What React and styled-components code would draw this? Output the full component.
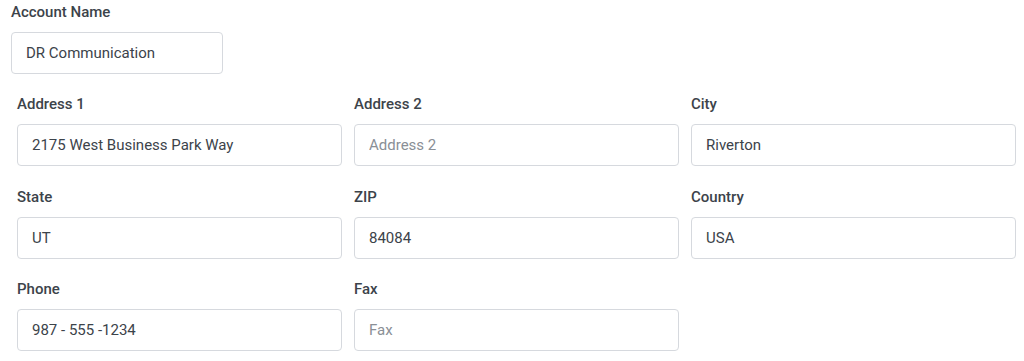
import React from 'react';
import styled, { createGlobalStyle } from 'styled-components';

const GlobalStyle = createGlobalStyle`
  html, body {
    margin: 0;
    padding: 0;
    background: #ffffff;
  }
  body {
    font-family: Roboto, "Liberation Sans", sans-serif;
  }
`;

const fields = [
  { label: 'Address 1', value: '2175 West Business Park Way' },
  { label: 'Address 2', placeholder: 'Address 2' },
  { label: 'City', value: 'Riverton' },
  { label: 'State', value: 'UT' },
  { label: 'ZIP', value: '84084' },
  { label: 'Country', value: 'USA' },
  { label: 'Phone', value: '987 - 555 -1234' },
  { label: 'Fax', placeholder: 'Fax' },
];

const App = () => {
  return (
    <>
      <GlobalStyle />
      <Page>
        <AccountField>
          <Label>Account Name</Label>
          <Input $width={212} defaultValue="DR Communication" />
        </AccountField>
        <FieldGrid>
          {fields.map((f) => (
            <Field key={f.label}>
              <Label>{f.label}</Label>
              <Input defaultValue={f.value} placeholder={f.placeholder} />
            </Field>
          ))}
        </FieldGrid>
      </Page>
    </>
  );
};

const Page = styled.div`
  padding: 3px 8px 0 11px;
  display: flex;
  flex-direction: column;
  gap: 21px;
`;

const AccountField = styled.div`
  display: flex;
  flex-direction: column;
`;

const FieldGrid = styled.div`
  display: grid;
  grid-template-columns: repeat(3, 325px);
  column-gap: 12px;
  row-gap: 21.5px;
  padding-left: 6px;
`;

const Field = styled.div`
  display: flex;
  flex-direction: column;
`;

const Label = styled.label`
  font-size: 15px;
  line-height: 18px;
  font-weight: 500;
  color: #3c434a;
  margin-bottom: 11px;
`;

const Input = styled.input`
  box-sizing: border-box;
  width: ${props => (props.$width ? `${props.$width}px` : '100%')};
  height: 42px;
  padding: 0 14px;
  border: 1px solid #d6d9de;
  border-radius: 4px;
  background: #ffffff;
  font-family: Roboto, "Liberation Sans", sans-serif;
  font-size: 15px;
  color: #3c434a;
  outline: none;

  &::placeholder {
    color: #8a8f96;
  }
`;

export default App;
